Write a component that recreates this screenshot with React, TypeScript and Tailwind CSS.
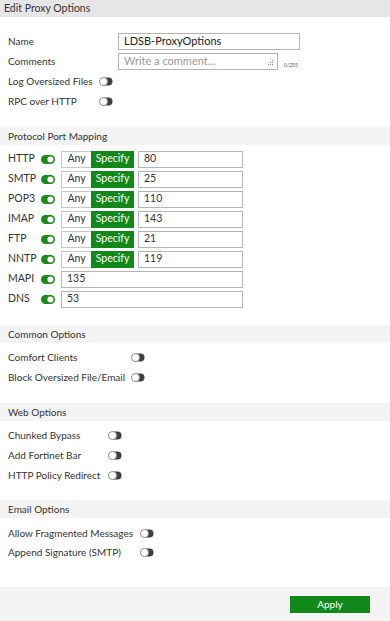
import React from "react";

function Toggle({ on = false }: { on?: boolean }) {
  return on ? (
    <svg width="14" height="9" viewBox="0 0 14 9" className="shrink-0">
      <rect x="0" y="0" width="14" height="9" rx="4.5" fill="#1b8a1b" />
      <circle cx="9.4" cy="4.5" r="3" fill="#ffffff" />
    </svg>
  ) : (
    <svg width="14" height="9" viewBox="0 0 14 9" className="shrink-0">
      <rect x="0.5" y="0.5" width="13" height="8" rx="4" fill="#3f3f3f" />
      <circle cx="4.5" cy="4.5" r="4" fill="#ffffff" stroke="#8a8a8a" strokeWidth="0.8" />
    </svg>
  );
}

function SectionBar({ title }: { title: string }) {
  return (
    <div className="h-[18px] bg-[#f4f4f4] flex items-center pl-[8px] text-[#333] whitespace-nowrap">{title}</div>
  );
}

function ToggleRow({ label, w, h = "h-[20px]" }: { label: string; w: string; h?: string }) {
  return (
    <div className={`${h} flex items-center pl-[8px]`}>
      <div className={`${w} shrink-0 whitespace-nowrap`}>{label}</div>
      <Toggle />
    </div>
  );
}

const ports: { p: string; v: string; spec: boolean }[] = [
  { p: "HTTP", v: "80", spec: true },
  { p: "SMTP", v: "25", spec: true },
  { p: "POP3", v: "110", spec: true },
  { p: "IMAP", v: "143", spec: true },
  { p: "FTP", v: "21", spec: true },
  { p: "NNTP", v: "119", spec: true },
  { p: "MAPI", v: "135", spec: false },
  { p: "DNS", v: "53", spec: false },
];

export default function App() {
  return (
    <div
      className="w-[390px] h-[621px] bg-white text-[10px] text-[#333] flex flex-col overflow-hidden"
      style={{ fontFamily: "Lato, 'Open Sans', sans-serif" }}
    >
      <div className="h-[17px] bg-[#e6e6e6] flex items-center pl-[4px] text-[10.5px]">Edit Proxy Options</div>

      <div className="pt-[14px] flex flex-col">
        <div className="h-[20px] flex items-center pl-[8px]">
          <div className="w-[110px] shrink-0">Name</div>
          <div className="w-[182px] h-[17px] border border-[#b5b5b5] flex items-center pl-[5px] text-[#222] text-[11px]">
            LDSB-ProxyOptions
          </div>
        </div>
        <div className="h-[20px] flex items-center pl-[8px]">
          <div className="w-[110px] shrink-0">Comments</div>
          <div className="relative w-[160px] h-[17px] border border-[#b5b5b5] flex items-center pl-[5px] text-[#9a9a9a] text-[11px]">
            Write a comment...
            <svg width="6" height="6" viewBox="0 0 6 6" className="absolute right-[3px] bottom-[3px]">
              <rect x="4" y="0" width="1" height="1" fill="#888" />
              <rect x="2" y="2" width="1" height="1" fill="#888" />
              <rect x="4" y="2" width="1" height="1" fill="#888" />
              <rect x="0" y="4" width="1" height="1" fill="#888" />
              <rect x="2" y="4" width="1" height="1" fill="#888" />
              <rect x="4" y="4" width="1" height="1" fill="#888" />
            </svg>
          </div>
          <div className="self-end mb-[2px] ml-[6px] text-[5px] text-[#555]">0/255</div>
        </div>
        <ToggleRow label="Log Oversized Files" w="w-[91px]" />
        <ToggleRow label="RPC over HTTP" w="w-[91px]" />
      </div>

      <div className="mt-[16px]">
        <SectionBar title="Protocol Port Mapping" />
      </div>
      <div className="pt-[4px] flex flex-col">
        {ports.map((r) => (
          <div key={r.p} className="h-[20px] flex items-center pl-[8px] text-[10.5px]">
            <div className="w-[33px] shrink-0">{r.p}</div>
            <Toggle on />
            <div className="w-[6px] shrink-0" />
            {r.spec ? (
              <>
                <div className="w-[30px] h-[17px] border border-[#c8c8c8] border-r-0 flex items-center justify-center">
                  Any
                </div>
                <div className="w-[43px] h-[17px] bg-[#11881a] text-white flex items-center justify-center">
                  Specify
                </div>
                <div className="ml-[4px] w-[105px] h-[17px] border border-[#b5b5b5] flex items-center pl-[5px]">
                  {r.v}
                </div>
              </>
            ) : (
              <div className="w-[182px] h-[17px] border border-[#b5b5b5] flex items-center pl-[5px]">
                {r.v}
              </div>
            )}
          </div>
        ))}
      </div>

      <div className="mt-[16px]">
        <SectionBar title="Common Options" />
      </div>
      <div className="pt-[4px] flex flex-col">
        <ToggleRow label="Comfort Clients" w="w-[123px]" />
        <ToggleRow label="Block Oversized File/Email" w="w-[123px]" />
      </div>

      <div className="mt-[16px]">
        <SectionBar title="Web Options" />
      </div>
      <div className="pt-[4px] flex flex-col">
        <ToggleRow label="Chunked Bypass" w="w-[100px]" />
        <ToggleRow label="Add Fortinet Bar" w="w-[100px]" />
        <ToggleRow label="HTTP Policy Redirect" w="w-[100px]" />
      </div>

      <div className="mt-[15px]">
        <SectionBar title="Email Options" />
      </div>
      <div className="pt-[6px] flex flex-col">
        <ToggleRow label="Allow Fragmented Messages" w="w-[132px]" h="h-[19px]" />
        <ToggleRow label="Append Signature (SMTP)" w="w-[132px]" h="h-[19px]" />
      </div>

      <div className="flex-1" />
      <div className="h-[34px] bg-[#f4f4f4] flex items-center justify-end pr-[20px]">
        <div className="w-[80px] h-[17px] bg-[#11881a] text-white flex items-center justify-center">
          Apply
        </div>
      </div>
    </div>
  );
}
